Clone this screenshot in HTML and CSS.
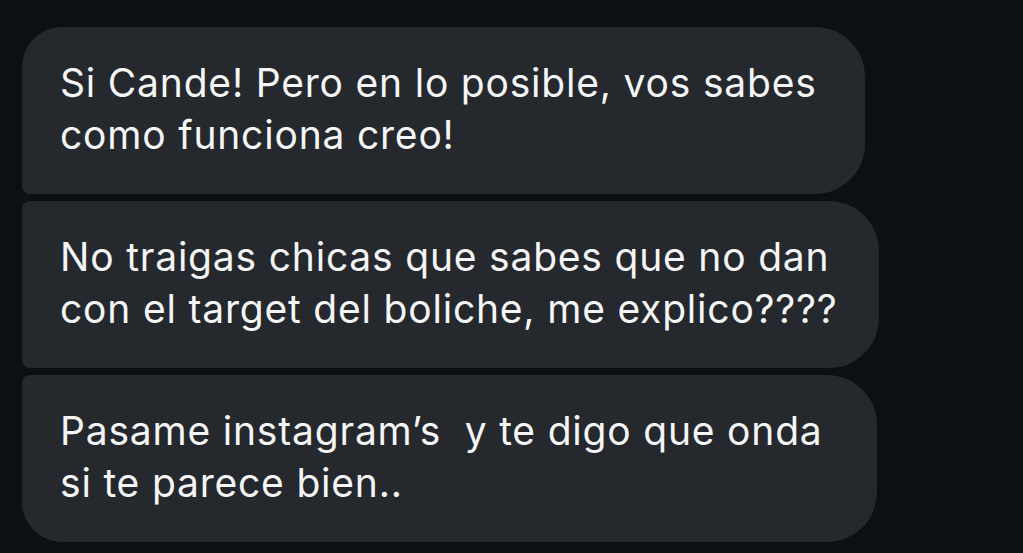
FILE: index.html
```html
<!DOCTYPE html>
<html lang="es">
<head>
<meta charset="utf-8">
<title>Mensajes</title>
<link rel="stylesheet" href="styles.css">
</head>
<body>
<main class="thread">
  <div class="bubble bubble--first bubble--w1">Si Cande! Pero en lo posible, vos sabes<br>como funciona creo!</div>
  <div class="bubble bubble--middle bubble--w2">No traigas chicas que sabes que no dan<br>con el target del boliche, me explico????</div>
  <div class="bubble bubble--last bubble--w3">Pasame instagram’s&nbsp; y te digo que onda<br>si te parece bien..</div>
</main>
</body>
</html>
```

FILE: styles.css
```css
html, body {
  margin: 0;
  padding: 0;
  background: #0c0f13;
  width: 1023px;
  height: 553px;
  overflow: hidden;
}

.thread {
  display: flex;
  flex-direction: column;
  align-items: flex-start;
  gap: 7px;
  padding: 27px 0 0 22px;
}

.bubble {
  box-sizing: border-box;
  height: 167px;
  padding: 30px 20px 33px 38px;
  background: #25282c;
  color: #f4f5f6;
  font-family: "Inter", "Noto Sans", sans-serif;
  font-size: 39px;
  letter-spacing: 0.8px;
  line-height: 52px;
  white-space: nowrap;
  border-radius: 50px;
}

.bubble--first { border-radius: 40px 50px 50px 8px; }
.bubble--middle { border-radius: 8px 50px 50px 8px; }
.bubble--last { border-radius: 8px 50px 50px 40px; }

.bubble--w1 { width: 843px; }
.bubble--w2 { width: 857px; }
.bubble--w3 { width: 855px; }
```
